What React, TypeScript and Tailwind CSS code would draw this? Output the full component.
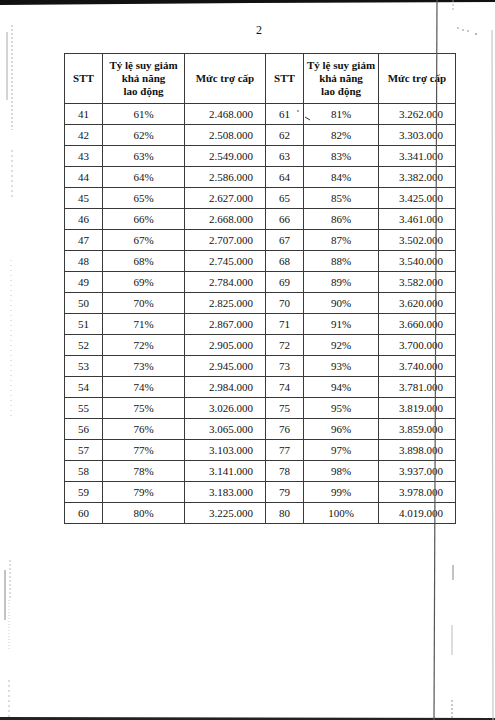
import React from "react";

const rows: [number, string, string, number, string, string][] = [];
const left = ["2.468.000","2.508.000","2.549.000","2.586.000","2.627.000","2.668.000","2.707.000","2.745.000","2.784.000","2.825.000","2.867.000","2.905.000","2.945.000","2.984.000","3.026.000","3.065.000","3.103.000","3.141.000","3.183.000","3.225.000"];
const right = ["3.262.000","3.303.000","3.341.000","3.382.000","3.425.000","3.461.000","3.502.000","3.540.000","3.582.000","3.620.000","3.660.000","3.700.000","3.740.000","3.781.000","3.819.000","3.859.000","3.898.000","3.937.000","3.978.000","4.019.000"];
for (let i = 0; i < 20; i++) {
  rows.push([41 + i, `${61 + i}%`, left[i], 61 + i, `${81 + i}%`, right[i]]);
}

const cell = "border border-[#3a3a3a] p-0 font-['Liberation_Serif',serif]";

export default function App() {
  return (
    <div className="relative w-[495px] h-[720px] bg-white overflow-hidden text-[#111] font-['Liberation_Serif',serif]">
      <div className="flex flex-col pl-[64px] pt-[22px]">
        <div className="w-[390px] text-center text-[12px] leading-[16px] h-[31px]">2</div>
        <table className="border-collapse table-fixed w-[391px] text-[11px] font-['Liberation_Serif',serif]">
          <colgroup>
            <col className="w-[38px]" />
            <col className="w-[82px]" />
            <col className="w-[81px]" />
            <col className="w-[38px]" />
            <col className="w-[75px]" />
            <col className="w-[77px]" />
          </colgroup>
          <thead>
            <tr className="h-[50px] font-bold leading-[13px]">
              <th className={cell}>STT</th>
              <th className={cell}>Tỷ lệ suy giảm<br />khả năng<br />lao động</th>
              <th className={cell}>Mức trợ cấp</th>
              <th className={cell}>STT</th>
              <th className={cell}>Tỷ lệ suy giảm<br />khả năng<br />lao động</th>
              <th className={cell}>Mức trợ cấp</th>
            </tr>
          </thead>
          <tbody>
            {rows.map((r) => (
              <tr key={r[0]} className="h-[21px] leading-[13px]">
                <td className={`${cell} text-center`}>{r[0]}</td>
                <td className={`${cell} text-center`}>{r[1]}</td>
                <td className={`${cell} text-right pr-[12px]`}>{r[2]}</td>
                <td className={`${cell} text-center`}>{r[3]}</td>
                <td className={`${cell} text-center`}>{r[4]}</td>
                <td className={`${cell} text-right pr-[12px]`}>{r[5]}</td>
              </tr>
            ))}
          </tbody>
        </table>
      </div>

      {/* scan artifacts overlay */}
      <svg className="absolute inset-0 pointer-events-none" width="495" height="720" viewBox="0 0 495 720">
        <polygon points="0,0 495,0 495,2 250,3 0,5" fill="#111" />
        <polygon points="0,717 495,718 495,720 0,720" fill="#222" />
        <line x1="437" y1="0" x2="434" y2="720" stroke="#555" strokeWidth="1.2" />
        <line x1="492" y1="30" x2="493" y2="720" stroke="#bbb" strokeWidth="1" />
        <line x1="12" y1="25" x2="12" y2="130" stroke="#999" strokeWidth="0.8" strokeDasharray="2 2" />
        <line x1="7" y1="32" x2="7" y2="100" stroke="#aaa" strokeWidth="1" />
        <line x1="12" y1="150" x2="12" y2="200" stroke="#aaa" strokeWidth="0.8" strokeDasharray="2 3" />
        <line x1="11" y1="260" x2="11" y2="420" stroke="#bbb" strokeWidth="0.8" strokeDasharray="1 4" />
        <line x1="10" y1="560" x2="10" y2="600" stroke="#aaa" strokeWidth="0.8" strokeDasharray="2 2" />
        <line x1="5" y1="570" x2="5" y2="620" stroke="#888" strokeWidth="1" />
        <line x1="9" y1="600" x2="9" y2="650" stroke="#bbb" strokeWidth="0.8" strokeDasharray="1 2" />
        <line x1="9" y1="680" x2="9" y2="718" stroke="#aaa" strokeWidth="0.8" strokeDasharray="2 3" />
        <line x1="453" y1="565" x2="453" y2="580" stroke="#888" strokeWidth="1" />
        <line x1="452" y1="625" x2="452" y2="655" stroke="#aaa" strokeWidth="0.8" />
        <line x1="452" y1="700" x2="452" y2="718" stroke="#777" strokeWidth="0.8" strokeDasharray="2 2" />
        <line x1="453" y1="0" x2="453" y2="12" stroke="#999" strokeWidth="0.8" strokeDasharray="2 2" />
        <circle cx="458" cy="28" r="0.7" fill="#666" />
        <circle cx="463" cy="30" r="0.7" fill="#666" />
        <circle cx="468" cy="31" r="0.7" fill="#666" />
        <circle cx="476" cy="34" r="0.8" fill="#555" />
        <line x1="305" y1="117" x2="310" y2="120" stroke="#333" strokeWidth="1" />
        <circle cx="298" cy="111" r="0.8" fill="#333" />
      </svg>
    </div>
  );
}
